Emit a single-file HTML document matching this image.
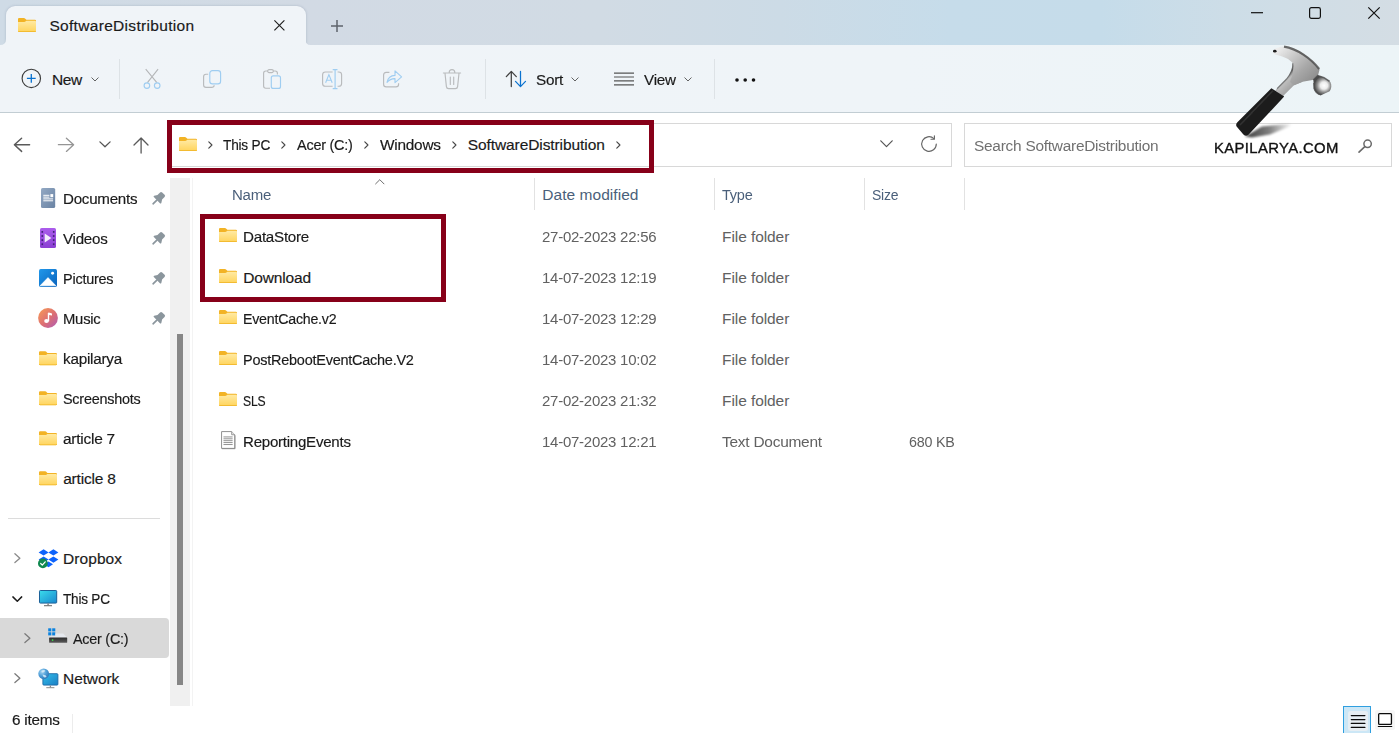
<!DOCTYPE html>
<html lang="en">
<head>
<meta charset="utf-8">
<title>SoftwareDistribution</title>
<style>
html,body{margin:0;padding:0;}
body{width:1399px;height:733px;overflow:hidden;background:#fff;position:relative;font-family:"Liberation Sans",sans-serif;}
.abs{position:absolute;}
.k{-webkit-text-stroke:0.18px currentColor;}
.t{position:absolute;white-space:pre;transform-origin:0 50%;line-height:20px;font-family:"Liberation Sans",sans-serif;}
svg{position:absolute;overflow:visible;}
#titlebar{left:0;top:0;width:1399px;height:45px;background:linear-gradient(90deg,#cfdbe6 0px,#d2dae4 300px,#d1dbe4 600px,#ccdbe6 780px,#c6dcea 950px,#c5dcea 1100px,#cdddE7 1230px,#d4dde4 1399px);}
#tab{left:6px;top:6px;width:299.5px;height:39px;background:#f0f4f8;border-radius:9px 9px 0 0;box-shadow:0 0 2.5px rgba(60,80,110,.28);}
#toolbar{left:0;top:45px;width:1399px;height:67px;background:linear-gradient(90deg,#f0f4f8 0px,#eff4f8 900px,#ecf4f7 1399px);}
#tbline{left:0;top:112px;width:1399px;height:1px;background:#c2cdd3;}
.vsep{width:1px;background:#dde2e6;}
#addr{left:168px;top:123px;width:782px;height:42px;border:1px solid #d8d8d8;box-sizing:content-box;background:#fff;}
#search{left:964px;top:123px;width:426px;height:42px;border:1px solid #d8d8d8;box-sizing:content-box;background:#fff;}
.red{border:5px solid #870019;box-sizing:border-box;}
#sbtrack{left:170px;top:178px;width:20px;height:528px;background:#f0f0f0;}
#sbthumb{left:177px;top:334px;width:6px;height:351px;background:#868686;}
#sbline{left:192px;top:178px;width:1px;height:528px;background:#f3f3f3;}
#sel{left:0;top:618px;width:169px;height:40px;background:#d9d9d9;border-radius:0 4px 4px 0;}
#sidesep{left:8px;top:518px;width:152px;height:1px;background:#dcdcdc;}
.hsep{top:178px;width:1px;height:32px;background:#e2e2e2;}
</style>
</head>
<body>
<div id="titlebar" class="abs"></div>
<div id="tab" class="abs"></div>
<div id="toolbar" class="abs"></div>
<!-- tab bottom flare corners -->
<svg style="left:0;top:39px" width="312" height="6" viewBox="0 0 312 6"><path d="M0 6 Q6 6 6 0 L6 6Z" fill="#f0f4f8"/><path d="M310.5 6 Q305.5 6 305.5 0 L305.5 6Z" fill="#f0f4f8"/></svg>
<div id="tbline" class="abs"></div>
<div class="abs vsep" style="left:119px;top:59px;height:40px"></div>
<div class="abs vsep" style="left:485px;top:59px;height:40px"></div>
<div class="abs vsep" style="left:714px;top:59px;height:40px"></div>

<div id="addr" class="abs"></div>
<div id="search" class="abs"></div>

<div id="sbtrack" class="abs"></div>
<div id="sbthumb" class="abs"></div>
<div id="sbline" class="abs"></div>
<div id="sel" class="abs"></div>
<div id="sidesep" class="abs"></div>

<div class="abs hsep" style="left:534px"></div>
<div class="abs hsep" style="left:714px"></div>
<div class="abs hsep" style="left:864px"></div>
<div class="abs hsep" style="left:964px"></div>

<!--ICONS1-START-->
<!-- shared defs -->
<svg width="0" height="0" style="left:0;top:0">
<defs>
<linearGradient id="fg" x1="0" y1="0" x2="0" y2="1"><stop offset="0" stop-color="#ffeaa4"/><stop offset="1" stop-color="#ffd45c"/></linearGradient>
<symbol id="fold" viewBox="0 0 18 14">
<path d="M0 1.1 Q0 0 1.1 0 H6 Q6.6 0 7 .4 L8.4 1.7 H16.9 Q18 1.7 18 2.8 V12.9 Q18 14 16.9 14 H1.1 Q0 14 0 12.9Z" fill="#f2b325"/>
<path d="M0 3.9 H6.3 Q6.9 3.9 7.4 3.5 L8.4 2.7 H16.9 Q18 2.7 18 3.8 V12.9 Q18 14 16.9 14 H1.1 Q0 14 0 12.9Z" fill="url(#fg)"/>
<path d="M0 12.9 V13 Q0 14 1.1 14 H16.9 Q18 14 18 13 V12.9 Q18 13.3 16.9 13.3 H1.1 Q0 13.3 0 12.9Z" fill="#f0b323"/>
</symbol>
<symbol id="chev" viewBox="0 0 6 10"><path d="M1 1 L5 5 L1 9" fill="none" stroke="#4a4a4a" stroke-width="1.45" stroke-linecap="round" stroke-linejoin="round"/></symbol>
<symbol id="chevd" viewBox="0 0 8 5"><path d="M.8 .8 L4 4 L7.2 .8" fill="none" stroke="#636363" stroke-width="1" stroke-linecap="round" stroke-linejoin="round"/></symbol>
<symbol id="pin" viewBox="-8 -8 16 16"><g transform="rotate(45)" fill="#8b969d"><rect x="-3.2" y="-7.6" width="6.4" height="6.6" rx="1.5"/><path d="M-3.2 -2.6 L-5.1 .4 Q-5.4 1.6 -4.3 1.6 H4.3 Q5.4 1.6 5.1 .4 L3.2 -2.6Z"/><rect x="-.85" y="1" width="1.7" height="6.6" rx=".6"/></g></symbol>
</defs>
</svg>

<!-- tab: folder, close, plus -->
<svg style="left:18px;top:18px" width="18" height="14"><use href="#fold"/></svg>
<svg style="left:274px;top:20px" width="11" height="11" viewBox="0 0 11 11"><path d="M.4 .4 L10.4 10.4 M10.4 .4 L.4 10.4" stroke="#1f1f1f" stroke-width="1.15" fill="none"/></svg>
<svg style="left:331px;top:20px" width="12" height="12" viewBox="0 0 12 12"><path d="M6 0 V12 M0 6 H12" stroke="#5d636b" stroke-width="1.5" fill="none"/></svg>

<!-- window controls -->
<svg style="left:1251px;top:11.7px" width="12" height="2" viewBox="0 0 12 2"><path d="M0 .7 H12" stroke="#111" stroke-width="1.2"/></svg>
<svg style="left:1309px;top:7px" width="12" height="12" viewBox="0 0 12 12"><rect x=".6" y=".6" width="10.8" height="10.8" rx="1.8" fill="none" stroke="#111" stroke-width="1.2"/></svg>
<svg style="left:1368px;top:7px" width="12" height="12" viewBox="0 0 12 12"><path d="M.3 .3 L11.7 11.7 M11.7 .3 L.3 11.7" stroke="#111" stroke-width="1.2" fill="none"/></svg>

<!-- toolbar: New -->
<svg style="left:21px;top:68px" width="21" height="21" viewBox="0 0 21 21"><circle cx="10.3" cy="10.4" r="9.2" fill="none" stroke="#3b3b3b" stroke-width="1.15"/><path d="M10.3 6 V14.8 M5.9 10.4 H14.7" stroke="#0a72cf" stroke-width="1.3" fill="none"/></svg>
<svg style="left:90.5px;top:77px" width="8" height="5"><use href="#chevd"/></svg>
<!-- cut -->
<svg style="left:143px;top:68px" width="19" height="22" viewBox="0 0 19 22"><path d="M2.7 1.2 L13.9 14.6 M15.1 1.2 L4.4 14.6" stroke="#b4b6b8" stroke-width="1.1" fill="none"/><circle cx="3.9" cy="17.6" r="2.8" fill="none" stroke="#9fcdf1" stroke-width="1.15"/><circle cx="14.2" cy="17.6" r="2.8" fill="none" stroke="#9fcdf1" stroke-width="1.15"/></svg>
<!-- copy -->
<svg style="left:203px;top:70px" width="19" height="18" viewBox="0 0 19 18"><path d="M5.2 4.2 H3 Q.6 4.2 .6 6.6 V15 Q.6 17.4 3 17.4 H8.6 Q11 17.4 11.2 15.2" fill="none" stroke="#b9bbbd" stroke-width="1.15"/><rect x="6.8" y=".6" width="10.8" height="13.2" rx="2.6" fill="none" stroke="#9fcdf1" stroke-width="1.15"/></svg>
<!-- paste -->
<svg style="left:263px;top:69px" width="19" height="21" viewBox="0 0 19 21"><path d="M7 19.2 H2.8 Q.6 19.2 .6 17 V4.2 Q.6 2 2.8 2 H4.6 M10.4 2 H12.2 Q14.4 2 14.4 4.2 V5.4" fill="none" stroke="#b9bbbd" stroke-width="1.15"/><rect x="4.6" y=".6" width="5.8" height="3" rx="1.5" fill="none" stroke="#b9bbbd" stroke-width="1.1"/><rect x="8.3" y="6.8" width="9.2" height="12.6" rx="2" fill="none" stroke="#9fcdf1" stroke-width="1.15"/></svg>
<!-- rename -->
<svg style="left:322px;top:69px" width="21" height="21" viewBox="0 0 21 21"><path d="M10.6 3 H3.4 Q.6 3 .6 5.8 V14.4 Q.6 17.2 3.4 17.2 H10.6 M15.6 3 H16.8 Q19.6 3 19.6 5.8 V14.4 Q19.6 17.2 16.8 17.2 H15.6" fill="none" stroke="#b9bbbd" stroke-width="1.15"/><path d="M13.1 .6 V19.6 M10.7 .6 H15.5 M10.7 19.6 H15.5" stroke="#9fcdf1" stroke-width="1.15" fill="none"/><path d="M3.6 13.8 L6.9 5.6 L10.2 13.8 M4.7 11.2 H9.1" stroke="#9fcdf1" stroke-width="1.1" fill="none"/></svg>
<!-- share -->
<svg style="left:383px;top:70px" width="20" height="18" viewBox="0 0 20 18"><path d="M6.4 2.4 H3.2 Q.6 2.4 .6 5 V14.2 Q.6 16.8 3.2 16.8 H13 Q15.6 16.8 15.6 14.2 V13.2" fill="none" stroke="#b9bbbd" stroke-width="1.15"/><path d="M4 12.4 Q5.4 5.6 12 5.4 V.9 L18.6 6.9 L12 12.6 V8.6 Q7.4 8.4 4 12.4Z" fill="none" stroke="#9fcdf1" stroke-width="1.1" stroke-linejoin="round"/></svg>
<!-- delete -->
<svg style="left:443px;top:68.5px" width="18" height="21" viewBox="0 0 18 21"><path d="M.4 4 H17.6 M6.2 3.6 Q6.2 .6 9 .6 Q11.8 .6 11.8 3.6 M2 4.2 L3.4 17.6 Q3.6 19.6 5.6 19.6 H12.4 Q14.4 19.6 14.6 17.6 L16 4.2 M7.3 8 V15.4 M10.7 8 V15.4" fill="none" stroke="#b9bbbd" stroke-width="1.15" stroke-linecap="round"/></svg>
<!-- sort -->
<svg style="left:505px;top:70px" width="22" height="18" viewBox="0 0 22 18"><path d="M6.3 16.6 V1.6 M1.3 6.6 L6.3 1.4 L11.3 6.6" fill="none" stroke="#404040" stroke-width="1.25" stroke-linecap="round" stroke-linejoin="round"/><path d="M15.5 1.4 V16.4 M10.5 11.4 L15.5 16.6 L20.5 11.4" fill="none" stroke="#0a72cf" stroke-width="1.25" stroke-linecap="round" stroke-linejoin="round"/></svg>
<svg style="left:571px;top:77px" width="8" height="5"><use href="#chevd"/></svg>
<!-- view -->
<svg style="left:614px;top:72px" width="20" height="14" viewBox="0 0 20 14"><path d="M0 1.2 H20 M0 5 H20 M0 8.9 H20 M0 12.8 H20" stroke="#555" stroke-width="1.2"/></svg>
<svg style="left:684px;top:77px" width="8" height="5"><use href="#chevd"/></svg>
<!-- more -->
<svg style="left:735px;top:77.5px" width="20" height="4" viewBox="0 0 20 4"><circle cx="2" cy="2" r="1.8" fill="#111"/><circle cx="10.2" cy="2" r="1.8" fill="#111"/><circle cx="18.5" cy="2" r="1.8" fill="#111"/></svg>
<!--ICONS1-END-->
<!--ICONS2-START-->
<!-- nav arrows -->
<svg style="left:13px;top:137px" width="18" height="16" viewBox="0 0 18 16"><path d="M16.6 7.7 H1.6 M8.6 1.2 L1.4 7.7 L8.6 14.4" fill="none" stroke="#5a5a5a" stroke-width="1.45" stroke-linecap="round" stroke-linejoin="round"/></svg>
<svg style="left:57px;top:137px" width="18" height="16" viewBox="0 0 18 16"><path d="M1.4 7.7 H16.4 M9.4 1.2 L16.6 7.7 L9.4 14.4" fill="none" stroke="#959595" stroke-width="1.3" stroke-linecap="round" stroke-linejoin="round"/></svg>
<svg style="left:98.5px;top:140.8px" width="12" height="7" viewBox="0 0 12 7"><path d="M.9 .9 L6 5.8 L11.1 .9" fill="none" stroke="#555" stroke-width="1.3" stroke-linecap="round" stroke-linejoin="round"/></svg>
<svg style="left:132.5px;top:136.5px" width="16" height="17" viewBox="0 0 16 17"><path d="M8.1 16 V1.2 M1 8 L8.1 1 L15 8" fill="none" stroke="#5a5a5a" stroke-width="1.3" stroke-linecap="round" stroke-linejoin="round"/></svg>
<!-- breadcrumb -->
<svg style="left:179px;top:137px" width="18" height="14"><use href="#fold"/></svg>
<svg style="left:207.6px;top:140.6px" width="4.8" height="8"><use href="#chev"/></svg>
<svg style="left:281.2px;top:140.6px" width="4.8" height="8"><use href="#chev"/></svg>
<svg style="left:363.8px;top:140.6px" width="4.8" height="8"><use href="#chev"/></svg>
<svg style="left:452px;top:140.6px" width="4.8" height="8"><use href="#chev"/></svg>
<svg style="left:616.4px;top:140.6px" width="4.8" height="8"><use href="#chev"/></svg>
<!-- address dropdown + refresh -->
<svg style="left:879.5px;top:140.4px" width="13" height="8" viewBox="0 0 13 8"><path d="M.8 .8 L6.5 6.6 L12.2 .8" fill="none" stroke="#555" stroke-width="1.2" stroke-linecap="round" stroke-linejoin="round"/></svg>
<svg style="left:920px;top:135px" width="18" height="18" viewBox="0 0 18 18"><path d="M16.3 9 A7.3 7.3 0 1 1 13.9 3.6" fill="none" stroke="#666" stroke-width="1.15" stroke-linecap="round"/><path d="M14.4 .8 V4.2 H11" fill="none" stroke="#666" stroke-width="1.15" stroke-linecap="round" stroke-linejoin="round"/></svg>
<!-- search magnifier -->
<svg style="left:1358px;top:139px" width="15" height="14" viewBox="0 0 15 14"><circle cx="9.6" cy="4.8" r="3.7" fill="none" stroke="#6a6a6a" stroke-width="1.5"/><path d="M6.8 7.6 L1 13.2" stroke="#6a6a6a" stroke-width="1.6" stroke-linecap="round"/></svg>
<!--ICONS2-END-->
<!--ICONS4-START-->
<!-- sidebar icons -->
<svg style="left:40.8px;top:188px" width="14.2" height="20" viewBox="0 0 14.2 20"><defs><linearGradient id="dg" x1="0" y1="0" x2="1" y2="1"><stop offset="0" stop-color="#93a9c4"/><stop offset="1" stop-color="#6a83a3"/></linearGradient></defs><rect width="14.2" height="20" rx="1.6" fill="url(#dg)"/><path d="M2.3 7.3 H8.4 M2.3 9.1 H8.4 M2.3 10.9 H12.1 M2.3 12.8 H12.1" stroke="#fff" stroke-width="1"/><rect x="9.4" y="6.1" width="2.8" height="3.1" fill="#fff"/></svg>
<svg style="left:40px;top:228px" width="16" height="20" viewBox="0 0 16 20"><defs><linearGradient id="vg" x1="0" y1="0" x2="0" y2="1"><stop offset="0" stop-color="#ab5cec"/><stop offset="1" stop-color="#8a3fd2"/></linearGradient></defs><rect width="16" height="20" rx="1.6" fill="url(#vg)"/><g fill="#43207a"><rect x="1.5" y="3" width="1.6" height="1.8"/><rect x="1.5" y="7.1" width="1.6" height="1.8"/><rect x="1.5" y="11.2" width="1.6" height="1.8"/><rect x="1.5" y="15.3" width="1.6" height="1.8"/><rect x="12.9" y="3" width="1.6" height="1.8"/><rect x="12.9" y="7.1" width="1.6" height="1.8"/><rect x="12.9" y="11.2" width="1.6" height="1.8"/><rect x="12.9" y="15.3" width="1.6" height="1.8"/></g><path d="M4.7 5.6 L11.4 10 L4.7 14.4Z" fill="#f3ecfb"/></svg>
<svg style="left:39px;top:269.2px" width="18" height="18" viewBox="0 0 18 18"><defs><linearGradient id="pg" x1="0" y1="0" x2="1" y2="1"><stop offset="0" stop-color="#2198ea"/><stop offset="1" stop-color="#0a63bd"/></linearGradient></defs><rect width="18" height="18" rx="1.7" fill="url(#pg)"/><path d="M1 16.8 L9 8.6 L17 16.8Z" fill="#fff" stroke="#fff" stroke-width=".6" stroke-linejoin="round"/><circle cx="13.6" cy="4.3" r="1.45" fill="#fff"/></svg>
<svg style="left:38px;top:307.8px" width="20" height="20" viewBox="0 0 20 20"><defs><linearGradient id="mg" x1=".1" y1=".1" x2=".9" y2=".9"><stop offset="0" stop-color="#f4945a"/><stop offset=".55" stop-color="#dc6f74"/><stop offset="1" stop-color="#b85fa8"/></linearGradient></defs><circle cx="10" cy="10" r="9.9" fill="url(#mg)"/><ellipse cx="8.5" cy="13.1" rx="2.3" ry="2" fill="#fff"/><path d="M10.1 13.2 V5.2 Q10.1 4.5 10.8 4.6 L13.4 5.2 Q14 5.4 14 6 V7.6 L10.9 6.9" fill="#fff"/><rect x="9.8" y="5" width="1.4" height="8.3" fill="#fff"/></svg>
<svg style="left:38.8px;top:350.8px" width="18" height="14.4"><use href="#fold"/></svg>
<svg style="left:38.8px;top:390.8px" width="18" height="14.4"><use href="#fold"/></svg>
<svg style="left:38.8px;top:430.8px" width="18" height="14.4"><use href="#fold"/></svg>
<svg style="left:38.8px;top:470.8px" width="18" height="14.4"><use href="#fold"/></svg>
<!-- pins -->
<svg style="left:149.9px;top:191.0px" width="16" height="16"><use href="#pin"/></svg>
<svg style="left:149.9px;top:231.0px" width="16" height="16"><use href="#pin"/></svg>
<svg style="left:149.9px;top:271.0px" width="16" height="16"><use href="#pin"/></svg>
<svg style="left:149.9px;top:311.0px" width="16" height="16"><use href="#pin"/></svg>
<!-- tree chevrons -->
<svg style="left:14px;top:553.2px" width="7" height="10.4" viewBox="0 0 7 10.4"><path d="M.9 .8 L5.9 5.2 L.9 9.6" fill="none" stroke="#8a8a8a" stroke-width="1.3" stroke-linecap="round" stroke-linejoin="round"/></svg>
<svg style="left:11.6px;top:595.5px" width="10.6" height="6.2" viewBox="0 0 10.6 6.2"><path d="M.9 .9 L5.3 5.2 L9.7 .9" fill="none" stroke="#1c1c1c" stroke-width="1.5" stroke-linecap="round" stroke-linejoin="round"/></svg>
<svg style="left:24.2px;top:633.2px" width="7" height="10.4" viewBox="0 0 7 10.4"><path d="M.9 .8 L5.9 5.2 L.9 9.6" fill="none" stroke="#7a7a7a" stroke-width="1.3" stroke-linecap="round" stroke-linejoin="round"/></svg>
<svg style="left:14px;top:673.2px" width="7" height="10.4" viewBox="0 0 7 10.4"><path d="M.9 .8 L5.9 5.2 L.9 9.6" fill="none" stroke="#7a7a7a" stroke-width="1.3" stroke-linecap="round" stroke-linejoin="round"/></svg>
<!-- dropbox -->
<svg style="left:38px;top:548.6px" width="21" height="19" viewBox="0 0 21 19"><g fill="#0d63fc"><path d="M5.6 .2 L10.6 3.4 L5.6 6.6 L.6 3.4Z"/><path d="M15.4 .2 L20.4 3.4 L15.4 6.6 L10.4 3.4Z"/><path d="M5.6 7.4 L10.6 10.6 L5.6 13.8 L.6 10.6Z"/><path d="M15.4 7.4 L20.4 10.6 L15.4 13.8 L10.4 10.6Z"/><path d="M10.5 12.4 L15 15.3 L10.5 18.2 L6 15.3Z"/></g><circle cx="4.9" cy="14.4" r="4.9" fill="#10884f"/><path d="M2.7 14.5 L4.3 16.1 L7.2 12.8" fill="none" stroke="#fff" stroke-width="1.2" stroke-linecap="round" stroke-linejoin="round"/></svg>
<!-- this pc -->
<svg style="left:39px;top:589.8px" width="18.2" height="16.4" viewBox="0 0 18.2 16.4"><defs><linearGradient id="tg" x1="0" y1="0" x2="1" y2="1"><stop offset="0" stop-color="#3adcec"/><stop offset="1" stop-color="#1987cf"/></linearGradient></defs><rect x=".5" y=".5" width="17.2" height="12.6" rx=".8" fill="url(#tg)" stroke="#1b5f98" stroke-width="1"/><path d="M9.1 13.4 V15.4" stroke="#7d7d7d" stroke-width="1.4"/><path d="M5 15.7 H13" stroke="#707070" stroke-width="1.1"/></svg>
<!-- acer drive -->
<svg style="left:47.8px;top:627.6px" width="19.4" height="15.2" viewBox="0 0 19.4 15.2"><defs><linearGradient id="hd" x1="0" y1="0" x2="0" y2="1"><stop offset="0" stop-color="#2e2e2e"/><stop offset="1" stop-color="#5a5a5a"/></linearGradient></defs><g fill="#0b82df"><rect x=".2" y=".3" width="3.1" height="3.1"/><rect x="4.2" y=".3" width="3.1" height="3.1"/><rect x=".2" y="4.3" width="3.1" height="3.1"/><rect x="4.2" y="4.3" width="3.1" height="3.1"/></g><path d="M7.4 5.6 H15.2 L19.2 9.8 H1.1 L2.6 8.2 H7.4Z" fill="#e6e9ee"/><rect x="1.1" y="9.6" width="18.1" height="5.2" rx=".5" fill="url(#hd)"/><circle cx="4.6" cy="12.1" r=".85" fill="#3fe04a"/></svg>
<!-- network -->
<svg style="left:37.6px;top:667.6px" width="21" height="21" viewBox="0 0 21 21"><defs><linearGradient id="ng" x1="0" y1="0" x2="1" y2="1"><stop offset="0" stop-color="#34bdea"/><stop offset="1" stop-color="#1a7fc4"/></linearGradient><radialGradient id="gg" cx=".35" cy=".3" r=".8"><stop offset="0" stop-color="#a9d6f2"/><stop offset=".5" stop-color="#4f9fd8"/><stop offset="1" stop-color="#2a6fb0"/></radialGradient></defs><rect x="4.9" y="5.7" width="15" height="11.4" rx=".9" fill="url(#ng)" stroke="#1d6aa6" stroke-width=".9"/><path d="M12.4 17.5 V19.4" stroke="#8a8a8a" stroke-width="1.3"/><path d="M8.3 19.7 H16.4" stroke="#8a8a8a" stroke-width="1"/><circle cx="5.7" cy="5.8" r="5.4" fill="url(#gg)"/><path d="M3.4 3 Q5.2 1.6 7.2 2.4 L6.2 4.2 L4 4.6Z M4.6 6.4 L7.6 7.2 L8.6 9 L6.6 9.6 L5 8.2Z" fill="#d8ecf8" fill-opacity=".85"/></svg>
<!--ICONS4-END-->
<!--ICONS5-START-->
<!-- file list icons -->
<svg style="left:219px;top:228.0px" width="18" height="14"><use href="#fold"/></svg>
<svg style="left:219px;top:269.0px" width="18" height="14"><use href="#fold"/></svg>
<svg style="left:219px;top:310.0px" width="18" height="14"><use href="#fold"/></svg>
<svg style="left:219px;top:351.0px" width="18" height="14"><use href="#fold"/></svg>
<svg style="left:219px;top:392.0px" width="18" height="14"><use href="#fold"/></svg>
<svg style="left:220.7px;top:430.8px" width="14.5" height="18.2" viewBox="0 0 15.2 18.4" preserveAspectRatio="none"><path d="M.6 .6 H11.2 L14.4 3.8 V17.6 H.6Z" fill="#fff" stroke="#8d8d8d" stroke-width="1"/><path d="M11.2 .6 V3.8 H14.4" fill="#e9e9e9" stroke="#8d8d8d" stroke-width=".9"/><path d="M2.6 6 H12.2 M2.6 7.9 H12.2 M2.6 9.8 H12.2 M2.6 11.7 H12.2 M2.6 13.7 H12.2" stroke="#8e8e8e" stroke-width="1"/><path d="M1 18 H14.8 V4.4" fill="none" stroke="#6f6f6f" stroke-width=".7" stroke-opacity=".7"/></svg>
<!-- sort caret -->
<svg style="left:375px;top:178.8px" width="9.6" height="5.4" viewBox="0 0 9.6 5.4"><path d="M.6 4.9 L4.8 .7 L9 4.9" fill="none" stroke="#666" stroke-width=".95" stroke-linecap="round" stroke-linejoin="round"/></svg>
<!-- status bar view buttons -->
<div class="abs" style="left:1343px;top:706px;width:28px;height:27px;box-sizing:border-box;border:1px solid #2f9fe0;border-bottom:none;background:#cce7f6"></div>
<div class="abs" style="left:1348px;top:711px;width:20px;height:20px;background:#e7eef3;border-radius:2.5px"></div>
<svg style="left:1351px;top:714px" width="14.2" height="15" viewBox="0 0 14.2 15"><path d="M.3 1.5 H13.9 M.3 5.5 H13.9 M.3 9.5 H13.9 M.3 13.5 H13.9" stroke="#0b0b0b" stroke-width="1.25" stroke-linecap="round"/></svg>
<div class="abs" style="left:1375px;top:710px;width:20px;height:19.6px;background:#f6f6f6;border-radius:2.5px"></div>
<svg style="left:1378px;top:713px" width="14.2" height="14.4" viewBox="0 0 14.2 14.4"><rect x=".65" y=".65" width="12.8" height="10.8" rx=".9" fill="#fff" stroke="#0b0b0b" stroke-width="1.3"/><path d="M.3 13.6 H13.8" stroke="#0b0b0b" stroke-width="1.05" stroke-linecap="round"/></svg>
<div class="abs" style="left:72px;top:714px;width:1px;height:19px;background:#ececec"></div>
<!--ICONS5-END-->
<!--ICONS6-->

<span class="t k" style="left:49.4px;top:15.50px;font-size:15.5px;color:#1a1a1a;letter-spacing:0.316px;">SoftwareDistribution</span>
<span class="t k" style="left:52.0px;top:69.50px;font-size:15.5px;color:#1a1a1a;letter-spacing:-0.458px;">New</span>
<span class="t k" style="left:536.1px;top:69.50px;font-size:15.5px;color:#1a1a1a;letter-spacing:-0.250px;transform:scaleX(0.9860);">Sort</span>
<span class="t k" style="left:643.9px;top:69.50px;font-size:15.5px;color:#1a1a1a;letter-spacing:-0.250px;transform:scaleX(0.9823);">View</span>
<span class="t k" style="left:222.7px;top:134.50px;font-size:15.5px;color:#1a1a1a;letter-spacing:-0.250px;transform:scaleX(0.8821);">This PC</span>
<span class="t k" style="left:296.7px;top:134.50px;font-size:15.5px;color:#1a1a1a;letter-spacing:-0.250px;transform:scaleX(0.9317);">Acer (C:)</span>
<span class="t k" style="left:379.8px;top:134.50px;font-size:15.5px;color:#1a1a1a;letter-spacing:-0.250px;transform:scaleX(0.9936);">Windows</span>
<span class="t k" style="left:467.7px;top:134.50px;font-size:15.5px;color:#1a1a1a;letter-spacing:-0.084px;">SoftwareDistribution</span>
<span class="t" style="left:973.8px;top:135.50px;font-size:15.5px;color:#707070;letter-spacing:-0.250px;transform:scaleX(0.9945);">Search SoftwareDistribution</span>
<span class="t" style="left:1214.4px;top:138.00px;font-size:14.6px;color:#111;letter-spacing:0.350px;transform:scaleX(1.0190);-webkit-text-stroke:0.35px #111;">KAPILARYA.COM</span>
<span class="t k" style="left:63.2px;top:188.50px;font-size:15.5px;color:#1a1a1a;letter-spacing:-0.250px;transform:scaleX(0.9751);">Documents</span>
<span class="t k" style="left:63.2px;top:228.50px;font-size:15.5px;color:#1a1a1a;letter-spacing:-0.250px;transform:scaleX(0.9766);">Videos</span>
<span class="t k" style="left:63.2px;top:268.50px;font-size:15.5px;color:#1a1a1a;letter-spacing:-0.250px;transform:scaleX(0.9327);">Pictures</span>
<span class="t k" style="left:63.2px;top:308.50px;font-size:15.5px;color:#1a1a1a;letter-spacing:-0.250px;transform:scaleX(0.9573);">Music</span>
<span class="t k" style="left:63.2px;top:348.50px;font-size:15.5px;color:#1a1a1a;letter-spacing:-0.250px;transform:scaleX(0.9862);">kapilarya</span>
<span class="t k" style="left:63.2px;top:388.50px;font-size:15.5px;color:#1a1a1a;letter-spacing:-0.250px;transform:scaleX(0.9286);">Screenshots</span>
<span class="t k" style="left:63.2px;top:428.50px;font-size:15.5px;color:#1a1a1a;letter-spacing:-0.250px;transform:scaleX(0.9984);">article 7</span>
<span class="t k" style="left:63.2px;top:468.50px;font-size:15.5px;color:#1a1a1a;letter-spacing:-0.198px;">article 8</span>
<span class="t k" style="left:63.1px;top:548.50px;font-size:15.5px;color:#1b1b1b;letter-spacing:0.051px;">Dropbox</span>
<span class="t k" style="left:63.1px;top:588.50px;font-size:15.5px;color:#1b1b1b;letter-spacing:-0.250px;transform:scaleX(0.8765);">This PC</span>
<span class="t k" style="left:72.8px;top:628.50px;font-size:15.5px;color:#1b1b1b;letter-spacing:-0.250px;transform:scaleX(0.9267);">Acer (C:)</span>
<span class="t k" style="left:63.1px;top:668.50px;font-size:15.5px;color:#1b1b1b;letter-spacing:-0.127px;">Network</span>
<span class="t k" style="left:11.9px;top:709.50px;font-size:15.5px;color:#1a1a1a;letter-spacing:-0.250px;transform:scaleX(0.9862);">6 items</span>
<span class="t" style="left:232.4px;top:184.50px;font-size:15.5px;color:#4a5f7a;letter-spacing:-0.250px;transform:scaleX(0.9678);">Name</span>
<span class="t" style="left:542.3px;top:184.50px;font-size:15.5px;color:#4a5f7a;letter-spacing:0.047px;">Date modified</span>
<span class="t" style="left:722.1px;top:184.50px;font-size:15.5px;color:#4a5f7a;letter-spacing:-0.250px;transform:scaleX(0.9343);">Type</span>
<span class="t" style="left:872.1px;top:184.50px;font-size:15.5px;color:#4a5f7a;letter-spacing:-0.250px;transform:scaleX(0.9012);">Size</span>
<span class="t k" style="left:243.2px;top:226.50px;font-size:15.5px;color:#1a1a1a;letter-spacing:-0.250px;transform:scaleX(0.9779);">DataStore</span>
<span class="t" style="left:542.3px;top:226.50px;font-size:15.5px;color:#616161;letter-spacing:-0.250px;transform:scaleX(0.9659);">27-02-2023 22:56</span>
<span class="t" style="left:722.0px;top:226.50px;font-size:15.5px;color:#616161;letter-spacing:-0.076px;">File folder</span>
<span class="t k" style="left:243.2px;top:267.50px;font-size:15.5px;color:#1a1a1a;letter-spacing:-0.134px;">Download</span>
<span class="t" style="left:542.3px;top:267.50px;font-size:15.5px;color:#616161;letter-spacing:-0.250px;transform:scaleX(0.9659);">14-07-2023 12:19</span>
<span class="t" style="left:722.0px;top:267.50px;font-size:15.5px;color:#616161;letter-spacing:-0.076px;">File folder</span>
<span class="t k" style="left:243.2px;top:308.50px;font-size:15.5px;color:#1a1a1a;letter-spacing:-0.250px;transform:scaleX(0.9165);">EventCache.v2</span>
<span class="t" style="left:542.3px;top:308.50px;font-size:15.5px;color:#616161;letter-spacing:-0.250px;transform:scaleX(0.9659);">14-07-2023 12:29</span>
<span class="t" style="left:722.0px;top:308.50px;font-size:15.5px;color:#616161;letter-spacing:-0.076px;">File folder</span>
<span class="t k" style="left:243.2px;top:349.50px;font-size:15.5px;color:#1a1a1a;letter-spacing:-0.250px;transform:scaleX(0.9328);">PostRebootEventCache.V2</span>
<span class="t" style="left:542.3px;top:349.50px;font-size:15.5px;color:#616161;letter-spacing:-0.250px;transform:scaleX(0.9659);">14-07-2023 10:02</span>
<span class="t" style="left:722.0px;top:349.50px;font-size:15.5px;color:#616161;letter-spacing:-0.076px;">File folder</span>
<span class="t k" style="left:243.2px;top:390.50px;font-size:15.5px;color:#1a1a1a;letter-spacing:-0.250px;transform:scaleX(0.7844);">SLS</span>
<span class="t" style="left:542.3px;top:390.50px;font-size:15.5px;color:#616161;letter-spacing:-0.250px;transform:scaleX(0.9659);">27-02-2023 21:32</span>
<span class="t" style="left:722.0px;top:390.50px;font-size:15.5px;color:#616161;letter-spacing:-0.076px;">File folder</span>
<span class="t k" style="left:243.2px;top:431.50px;font-size:15.5px;color:#1a1a1a;letter-spacing:-0.250px;transform:scaleX(0.9713);">ReportingEvents</span>
<span class="t" style="left:542.3px;top:431.50px;font-size:15.5px;color:#616161;letter-spacing:-0.250px;transform:scaleX(0.9659);">14-07-2023 12:21</span>
<span class="t" style="left:722.0px;top:431.50px;font-size:15.5px;color:#616161;letter-spacing:-0.250px;transform:scaleX(0.9971);">Text Document</span>
<span class="t" style="left:908.9px;top:431.50px;font-size:15.5px;color:#616161;letter-spacing:-0.250px;transform:scaleX(0.9232);">680 KB</span>

<!-- red highlight boxes -->
<div class="abs red" style="left:167px;top:120px;width:487px;height:53px"></div>
<div class="abs red" style="left:200px;top:214px;width:246px;height:88px"></div>

<!--HAMMER-START-->
<!-- hammer logo -->
<svg style="left:1230px;top:40px" width="110" height="100" viewBox="1230 40 110 100">
<defs>
<linearGradient id="hm1" gradientUnits="userSpaceOnUse" x1="1278" y1="48" x2="1312" y2="84"><stop offset="0" stop-color="#eeeeee"/><stop offset=".3" stop-color="#cdcdcd"/><stop offset=".65" stop-color="#a8a8a8"/><stop offset="1" stop-color="#8c8c8c"/></linearGradient>
<linearGradient id="hm2" gradientUnits="userSpaceOnUse" x1="1282" y1="80" x2="1292" y2="90"><stop offset="0" stop-color="#5e5e5e"/><stop offset=".28" stop-color="#bdbdbd"/><stop offset="1" stop-color="#9d9d9d"/></linearGradient>
<radialGradient id="hm3" gradientUnits="userSpaceOnUse" cx="1324" cy="85.5" r="9.6"><stop offset="0" stop-color="#ffffff"/><stop offset=".38" stop-color="#ececec"/><stop offset=".7" stop-color="#909090"/><stop offset="1" stop-color="#4c4c4c"/></radialGradient>
<linearGradient id="hsh" gradientUnits="userSpaceOnUse" x1="1246" y1="0" x2="1292" y2="0"><stop offset="0" stop-color="#000" stop-opacity=".75"/><stop offset=".5" stop-color="#000" stop-opacity=".5"/><stop offset="1" stop-color="#000" stop-opacity="0"/></linearGradient>
<filter id="hbl" x="-20%" y="-50%" width="140%" height="200%"><feGaussianBlur stdDeviation="1.3"/></filter>
<filter id="hb2" x="-10%" y="-10%" width="120%" height="120%"><feGaussianBlur stdDeviation=".5"/></filter>
</defs>
<path d="M1245 136.5 L1262 126.5 L1291 123.5 L1291 126 L1270 134.5 L1252 137.5Z" fill="url(#hsh)" filter="url(#hbl)"/>
<g filter="url(#hb2)">
<path d="M1275.4 90.4 L1286.6 79 C1290.5 74 1293.2 68 1292.8 63.2 L1300 70 L1302.6 81.7 L1293.7 85.4 L1282.6 96.4Z" fill="url(#hm2)"/>
<path d="M1273.2 51.3 C1275.5 46.4 1285 45.4 1292 47.8 C1303 51.8 1313 60.6 1319.6 69.5 L1318 75.6 L1312.5 80 L1302.6 81.8 L1293.7 85.3 L1290 82 C1293 74 1294 67 1292.8 63.2 C1290 59 1283 56 1275 54.4 C1273.2 53.6 1272.8 52.4 1273.2 51.3Z" fill="url(#hm1)"/>
<path d="M1292.8 63.2 C1293.2 68 1290.5 74 1286.6 79 L1277 88.6" fill="none" stroke="#555" stroke-width="1.1" stroke-opacity=".75"/>
<path d="M1284 46.6 C1297 48.6 1311 58.4 1319.2 69" fill="none" stroke="#4a4a4a" stroke-width="2.2" stroke-opacity=".8"/>
<ellipse cx="1274.8" cy="51.2" rx="1.8" ry="1.4" fill="#1c1c1c"/>
<path d="M1313.4 79.4 L1317.8 75.4 L1323 77.2 L1330.4 82 C1332 85.4 1331.4 89 1329.6 91.2 L1321 95.2 C1317.4 94.6 1314.6 91.6 1313.8 88.4Z" fill="url(#hm3)"/>
<path d="M1313.2 80 L1317.8 75.6 L1324 77.6 L1329.6 81.4" fill="none" stroke="#4a4a4a" stroke-width="1.5" stroke-opacity=".8"/>
<path d="M1313.6 83 L1314 88.6 C1315 91.8 1317.6 94.4 1321 95" fill="none" stroke="#555" stroke-width="1.2" stroke-opacity=".7"/>
<path d="M1271.4 88.2 L1284.2 96.6 L1248.2 135 Q1245.6 136.6 1243.4 134.4 L1236.6 126.6 Q1235.4 124 1237.4 122.2Z" fill="#1d1d1d"/>
<path d="M1273 90.5 L1240 125" stroke="#3a3a3a" stroke-width="1.6" fill="none" stroke-opacity=".7"/>
</g>
</svg>
<!--HAMMER-END-->
<!--OVERLAY-->
</body>
</html>
